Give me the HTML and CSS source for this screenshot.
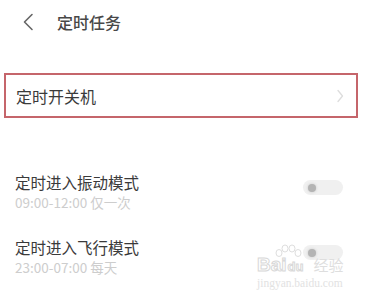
FILE: index.html
```html
<!DOCTYPE html>
<html lang="zh">
<head>
<meta charset="utf-8">
<link rel="stylesheet" href="styles.css">
</head>
<body>
<div class="page">
  <header class="header">
    <svg class="back" width="12" height="18" viewBox="0 0 12 18"><path d="M10 1.5 L2.5 9 L10 16.5" fill="none" stroke="#666" stroke-width="1.6" stroke-linecap="round" stroke-linejoin="round"/></svg>
    <h1 class="title">定时任务</h1>
  </header>
  <div class="card">
    <span class="card-label">定时开关机</span>
    <svg class="chev" width="7" height="14" viewBox="0 0 7 14"><path d="M1 1.5 L5.5 7 L1 12.5" fill="none" stroke="#ddd" stroke-width="1.3" stroke-linecap="round" stroke-linejoin="round"/></svg>
  </div>
  <div class="rows">
    <div class="row">
      <div class="row-text">
        <div class="row-title">定时进入振动模式</div>
        <div class="row-sub">09:00-12:00 仅一次</div>
      </div>
      <div class="toggle"><span class="knob"></span></div>
    </div>
    <div class="row">
      <div class="row-text">
        <div class="row-title">定时进入飞行模式</div>
        <div class="row-sub">23:00-07:00 每天</div>
      </div>
      <div class="toggle"><span class="knob"></span></div>
    </div>
  </div>
  <div class="watermark">
    <svg class="wm-paw" width="32" height="22" viewBox="0 0 32 22"><g fill="none" stroke="#dedede" stroke-width="1"><ellipse cx="6" cy="9" rx="3" ry="3.5"/><ellipse cx="12" cy="4.5" rx="3" ry="3.5"/><ellipse cx="19" cy="4.5" rx="3" ry="3.5"/><ellipse cx="25" cy="9" rx="3" ry="3.5"/></g></svg>
    <div class="wm-logo"><span class="wm-bai">Bai</span><span class="wm-du">du</span><span class="wm-jy">经验</span></div>
    <div class="wm-url">jingyan.baidu.com</div>
  </div>
</div>
</body>
</html>
```
FILE: styles.css
```css
* { box-sizing: border-box; margin: 0; padding: 0; }
html, body { background: #fff; }
body {
  font-family: "Noto Sans CJK SC", "Noto Sans", sans-serif;
  color: #333;
}
.page {
  position: relative;
  width: 373px;
  height: 300px;
  overflow: hidden;
}
.header {
  height: 44px;
  display: flex;
  align-items: center;
  padding-left: 22px;
}
.back { display: block; }
.title {
  margin-left: 23px;
  font-size: 16px;
  font-weight: 500;
  color: #484848;
  line-height: 22px;
}
.card {
  margin: 29px 15px 0 4px;
  height: 45px;
  border: 2.5px solid #c5656b;
  display: flex;
  align-items: center;
  justify-content: space-between;
  padding: 0 12px 0 10px;
}
.card-label {
  font-size: 16px;
  line-height: 22px;
  color: #3a3a3a;
}
.chev { display: block; }
.rows {
  margin-top: 41px;
}
.row {
  height: 65px;
  display: flex;
  justify-content: space-between;
  align-items: flex-start;
  padding: 12px 30px 0 15px;
}
.row-title {
  font-size: 15.5px;
  line-height: 22px;
  color: #3a3a3a;
}
.row-sub {
  font-size: 13.5px;
  line-height: 18px;
  color: #cdcdcd;
}
.toggle {
  margin-top: 9px;
  width: 40px;
  height: 15px;
  border-radius: 8px;
  background: #f0f0f0;
  display: flex;
  align-items: center;
  padding-left: 5px;
}
.knob {
  width: 8px;
  height: 8px;
  border-radius: 50%;
  background: #b4b4b4;
  box-shadow: 0 0 3px #c8c8c8;
}
.watermark {
  position: absolute;
  left: 257px;
  top: 244px;
  width: 92px;
  height: 48px;
}
.wm-paw {
  position: absolute;
  left: 16px;
  top: 0;
}
.wm-logo {
  position: absolute;
  left: 0;
  top: 11px;
  display: flex;
  align-items: baseline;
  white-space: nowrap;
}
.wm-bai, .wm-du {
  font-family: "Liberation Sans", sans-serif;
  font-size: 19px;
  font-weight: bold;
  line-height: 20px;
  color: #fff;
  -webkit-text-stroke: 1px #d8d8d8;
}
.wm-du {
  font-size: 13px;
  margin-left: 1px;
  margin-right: 10px;
}
.wm-jy {
  font-size: 15px;
  line-height: 20px;
  color: #dedede;
}
.wm-url {
  position: absolute;
  left: 0;
  top: 32px;
  font-family: "Liberation Serif", serif;
  font-size: 11.5px;
  line-height: 14px;
  color: #e2e2e2;
  white-space: nowrap;
}
```
